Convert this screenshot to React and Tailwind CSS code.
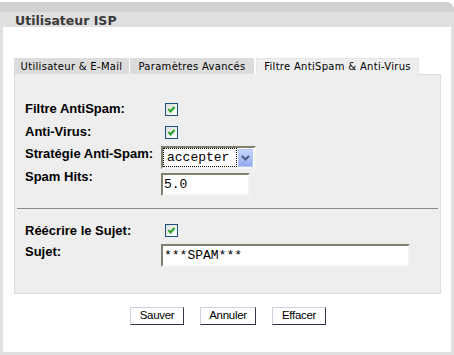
import React from 'react'

const labelFont = { fontFamily: '"Liberation Sans", Arial, sans-serif' }
const verdana = { fontFamily: '"DejaVu Sans", Verdana, sans-serif' }
const mono = { fontFamily: '"Liberation Mono", "Courier New", monospace' }

function Check() {
  return (
    <svg width="13" height="13" viewBox="0 0 13 13" className="block">
      <defs>
        <linearGradient id="cbg" x1="0" y1="0" x2="1" y2="1">
          <stop offset="0" stopColor="#dcdcd7" />
          <stop offset="1" stopColor="#ffffff" />
        </linearGradient>
      </defs>
      <rect x="0.5" y="0.5" width="12" height="12" fill="url(#cbg)" stroke="#1c5180" />
      <polyline points="3.5,6 5.5,8.5 9.5,4" fill="none" stroke="#21a121" strokeWidth="2" />
    </svg>
  )
}

function Row({ label, children, h, ctrl = '' }) {
  return (
    <div className="flex items-start" style={{ height: h }}>
      <div className="w-[136px] text-[13px] leading-[15px] font-bold text-black" style={labelFont}>{label}</div>
      <div className={ctrl}>{children}</div>
    </div>
  )
}

function TextBox({ value, w }) {
  return (
    <div className="h-[23px] border-2 border-t-[#7f7f70] border-l-[#7f7f70] border-r-[#f4f4ee] border-b-[#f4f4ee] bg-white flex items-center pl-[1px] text-[13px] text-black"
      style={{ ...mono, width: w }}>
      {value}
    </div>
  )
}

function Tab({ children, active, w }) {
  return (
    <div className={`h-[16px] flex items-center justify-center text-[10px] tracking-[0.3px] text-black ${active ? 'bg-[#eeeeee] border border-b-0 border-[#e6e6e6]' : 'bg-[#dcdcdc]'}`}
      style={{ ...verdana, width: w }}>
      {children}
    </div>
  )
}

function Btn({ children, w }) {
  return (
    <button className="h-[18px] bg-white border border-t-[#cfcde0] border-l-[#cfcde0] border-r-[#33334d] border-b-[#33334d] text-[11.5px] leading-none text-black tracking-[-0.3px]"
      style={{ ...labelFont, width: w }}>
      {children}
    </button>
  )
}

export default function App() {
  return (
    <div className="w-[454px] h-[355px] bg-white pt-[2px]">
      <div className="h-[353px] bg-[#e0e0e0] rounded-tr-[8px] flex flex-col">
        <div className="h-[25px] rounded-tr-[8px] bg-[linear-gradient(#d2d2d2_0,#d2d2d2_10px,#e0e0e0_10px)] pl-[15px] pt-[5px]">
          <span className="text-[12.5px] leading-[15px] font-bold text-[#3a3a3a]" style={verdana}>Utilisateur ISP</span>
        </div>
        <div className="mx-[3px] mb-[3px] flex-1 bg-white pt-[31px] pl-[11px] pr-[10px]">
          <div className="flex items-end">
            <Tab w="115px">Utilisateur &amp; E-Mail</Tab>
            <div className="w-[1px]" />
            <Tab w="124px">Paramètres Avancés</Tab>
            <div className="w-[2px]" />
            <Tab w="163px" active>Filtre AntiSpam &amp; Anti-Virus</Tab>
          </div>
          <div className="border border-t-0 border-[#dddddd] bg-[#eeeeee] pt-[27px] pb-[26px] relative">
            <div className="absolute top-0 left-[404px] right-[-1px] h-px bg-[#dddddd]" />
            <div className="pl-[10px]">
              <Row label="Filtre AntiSpam:" h="23px" ctrl="pt-[2px] pl-[4px]"><Check /></Row>
              <Row label="Anti-Virus:" h="22px" ctrl="pt-[2px] pl-[4px]"><Check /></Row>
              <Row label="Stratégie Anti-Spam:" h="23px">
                <div className="w-[95px] h-[23px] border-2 border-t-[#7f7f70] border-l-[#7f7f70] border-r-[#f4f4ee] border-b-[#f4f4ee] bg-white flex items-center pl-[0px]">
                  <div className="w-[74px] h-[19px] border border-dotted border-black flex items-center pl-[3px] text-[13px] text-black" style={mono}>accepter</div>
                  <div className="ml-[1px] w-[15px] h-[18px] border border-[#b4c6f7] bg-[linear-gradient(#c6d5fb,#93abef)] flex items-center justify-center">
                    <svg width="9" height="6" viewBox="0 0 9 6">
                      <polyline points="1,1 4.5,4.5 8,1" fill="none" stroke="#4b5e86" strokeWidth="2" />
                    </svg>
                  </div>
                </div>
              </Row>
              <Row label="Spam Hits:" h="27px" ctrl="pt-[4px]"><TextBox value="5.0" w="89px" /></Row>
            </div>
            <div className="mx-[2px] mt-[12px] h-px bg-[#8c8c8c]" />
            <div className="pl-[10px] pt-[14px]">
              <Row label="Réécrire le Sujet:" h="21px" ctrl="pt-[1px] pl-[4px]"><Check /></Row>
              <Row label="Sujet:" h="23px"><TextBox value="***SPAM***" w="249px" /></Row>
            </div>
          </div>
          <div className="flex justify-center gap-[16px] mt-[13px] pl-[1px]">
            <Btn w="54px">Sauver</Btn>
            <Btn w="56px">Annuler</Btn>
            <Btn w="54px">Effacer</Btn>
          </div>
        </div>
      </div>
    </div>
  )
}
